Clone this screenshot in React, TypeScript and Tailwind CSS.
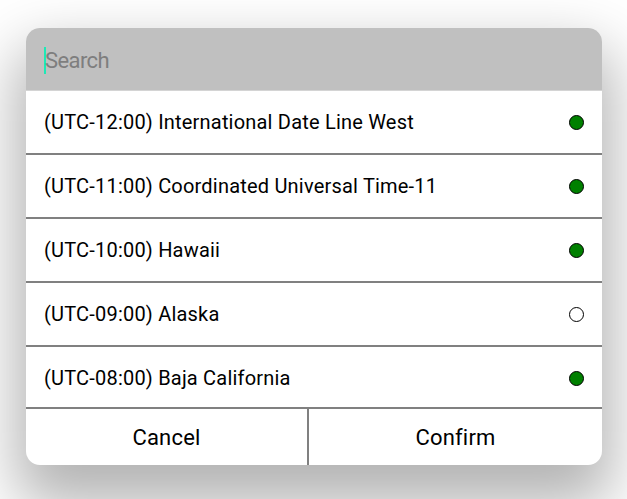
const zones = [
  { label: '(UTC-12:00) International Date Line West', on: true },
  { label: '(UTC-11:00) Coordinated Universal Time-11', on: true },
  { label: '(UTC-10:00) Hawaii', on: true },
  { label: '(UTC-09:00) Alaska', on: false },
  { label: '(UTC-08:00) Baja California', on: true },
];

export default function App() {
  return (
    <div
      className="w-full h-[499px] bg-white pt-[28px] px-[26px] overflow-hidden"
      style={{ fontFamily: 'Roboto, "Liberation Sans", sans-serif' }}
    >
      <div className="w-[576px] h-[437px] flex flex-col rounded-[14px] overflow-hidden bg-white shadow-[0_30px_60px_10px_rgba(0,0,0,0.3)]">
        {/* Search */}
        <div className="h-[63px] shrink-0 bg-[#c0c0c0] border-b border-[#d4d4d4] flex items-center pl-[18px]">
          <span className="w-[2px] h-[27px] mt-[2px] bg-[#1de9b6] mr-[-1px]" />
          <span className="text-[22px] mt-[3px] tracking-[-0.6px] text-[#7e7e7e]">Search</span>
        </div>

        {/* List */}
        <div className="h-[316px] shrink-0 overflow-hidden">
          {zones.map((z) => (
            <div
              key={z.label}
              className="h-[64px] border-b-2 border-[#808080] flex items-center justify-between pl-[18px] pr-[18px]"
            >
              <span className="text-[20px] tracking-[0.2px] text-black">{z.label}</span>
              <span
                className={`w-[15px] h-[15px] rounded-full border-[1.5px] border-black ${
                  z.on ? 'bg-[#008000]' : 'bg-white'
                }`}
              />
            </div>
          ))}
        </div>

        {/* Buttons */}
        <div className="flex-1 grid grid-cols-[283px_1fr] border-t-2 border-[#808080]">
          <button className="text-[22px] tracking-[0.2px] text-black border-r-2 border-[#808080]">Cancel</button>
          <button className="text-[22px] tracking-[0.2px] text-black">Confirm</button>
        </div>
      </div>
    </div>
  );
}
